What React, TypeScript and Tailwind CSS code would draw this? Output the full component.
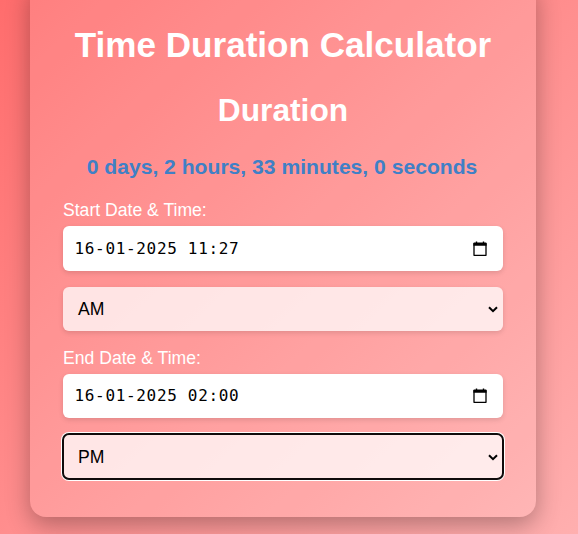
import type { ReactNode } from 'react';

function DateField({ date, time }: { date: string; time: string }) {
  return (
    <div className="flex h-[44.4px] items-center justify-between rounded-[6px] bg-white pl-[11.5px] pr-[15px] shadow-[0_2px_5px_rgba(0,0,0,0.12)]">
      <span className="whitespace-pre pt-px font-['DejaVu_Sans_Mono',monospace] text-[16px] leading-5 tracking-[0.67px] text-black">
        {date} {time}
      </span>
      <svg className="h-4 w-4" viewBox="0 0 16 16" fill="none">
        <path d="M4.5 0.4v2M11.5 0.4v2" stroke="#000" strokeWidth="1.4" />
        <path d="M2 3h12v11.3H2z" stroke="#000" strokeWidth="1.3" strokeLinejoin="round" />
        <path d="M1.4 2.3q0-.8.8-.8h11.6q.8 0 .8.8v2.4H1.4z" fill="#000" />
      </svg>
    </div>
  );
}

function Period({ value, focused = false }: { value: string; focused?: boolean }) {
  return (
    <div
      className={`mt-4 flex items-center justify-between rounded-[6px] bg-[rgba(255,255,255,0.75)] pl-[15px] pr-[5px] text-[17.6px] text-black ${
        focused
          ? 'h-[45px] shadow-[0_0_0_2px_#fff] outline-2 -outline-offset-1 outline-[#100b0b]'
          : 'h-[44px] shadow-[0_2px_5px_rgba(0,0,0,0.12)]'
      }`}
    >
      <span className="pt-px">{value}</span>
      <svg className="mt-0.5 h-[7px] w-[10px]" viewBox="0 0 10 7" fill="none">
        <path d="M1 1.2l4 4 4-4" stroke="#000" strokeWidth="2" />
      </svg>
    </div>
  );
}

function Label({ children }: { children: ReactNode }) {
  return <div className="h-[25px] text-[17.6px] leading-[18px] text-white">{children}</div>;
}

export default function App() {
  return (
    <main className="h-[534px] w-full overflow-hidden bg-[linear-gradient(137deg,#ff6d6d,#ffafaf)] pl-[30px] font-['Liberation_Sans',Arial,sans-serif]">
      <section className="-mt-5 h-[537px] w-[506px] rounded-[16px] bg-white/12 px-[33px] pt-[45px] shadow-[0_8px_25px_rgba(0,0,0,0.3)]">
        <h1 className="text-center text-[35.1px] font-bold leading-10 text-white">Time Duration Calculator</h1>
        <h2 className="mt-[25px] text-center text-[31.7px] font-bold leading-10 text-white">Duration</h2>
        <p className="-ml-2 -mr-1.5 mt-[25px] text-center text-[21.12px] font-bold leading-6 text-[#3f80c6]">
          0 days, 2 hours, 33 minutes, 0 seconds
        </p>
        <div className="mt-[22.4px]">
          <Label>Start Date &amp; Time:</Label>
          <DateField date="16-01-2025" time="11:27" />
          <Period value="AM" />
        </div>
        <div className="mt-[18px]">
          <Label>End Date &amp; Time:</Label>
          <DateField date="16-01-2025" time="02:00" />
          <Period value="PM" focused />
        </div>
      </section>
    </main>
  );
}
